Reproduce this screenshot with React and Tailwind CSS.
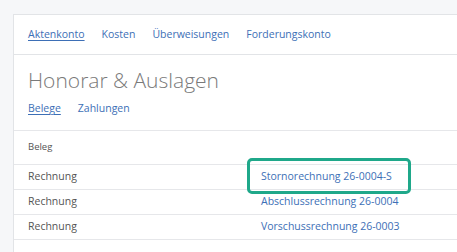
import React from 'react'

const rows = [
  { type: 'Rechnung', doc: 'Stornorechnung 26-0004-S', marked: true },
  { type: 'Rechnung', doc: 'Abschlussrechnung 26-0004' },
  { type: 'Rechnung', doc: 'Vorschussrechnung 26-0003' },
]

export default function App() {
  return (
    <div
      className="h-[252px] w-[457px] overflow-hidden bg-[#f6f7f9] pl-[13px] pt-[14px]"
      style={{ fontFamily: '"Open Sans", "Liberation Sans", sans-serif' }}
    >
      <div className="h-full w-[460px] border-l border-t border-[#e2e4e7] bg-white">
        <nav className="flex h-[40px] items-center gap-[17px] border-b border-[#e2e4e7] pl-[14px] text-[10.5px] text-[#3d6fb6]">
          <span className="underline underline-offset-2">Aktenkonto</span>
          <span>Kosten</span>
          <span>Überweisungen</span>
          <span>Forderungskonto</span>
        </nav>

        <div className="pl-[14px] pt-[11px]">
          <h1 className="text-[21px] font-light leading-[28px] text-[#7a7a7a]">Honorar &amp; Auslagen</h1>
          <div className="mt-[6px] flex gap-[17px] text-[10.5px] leading-[16px] text-[#3d6fb6]">
            <span className="underline underline-offset-2">Belege</span>
            <span>Zahlungen</span>
          </div>
        </div>

        <div className="mt-[14px] border-t border-[#e6e7ea] text-[10.5px] text-[#555]">
          <div className="flex h-[34px] items-center border-b border-[#e6e7ea] pl-[14px] text-[9.5px]">
            Beleg
          </div>
          {rows.map((row) => (
            <div key={row.doc} className="relative flex h-[25px] items-center border-b border-[#e6e7ea] pl-[14px]">
              <span className="w-[233px] shrink-0">{row.type}</span>
              <span className="text-[#3d6fb6]">{row.doc}</span>
              {row.marked && (
                <span className="pointer-events-none absolute left-[233px] -top-[7px] h-[36px] w-[164px] rounded-[5px] border-[3px] border-[#1fa88a]" />
              )}
            </div>
          ))}
        </div>
      </div>
    </div>
  )
}
